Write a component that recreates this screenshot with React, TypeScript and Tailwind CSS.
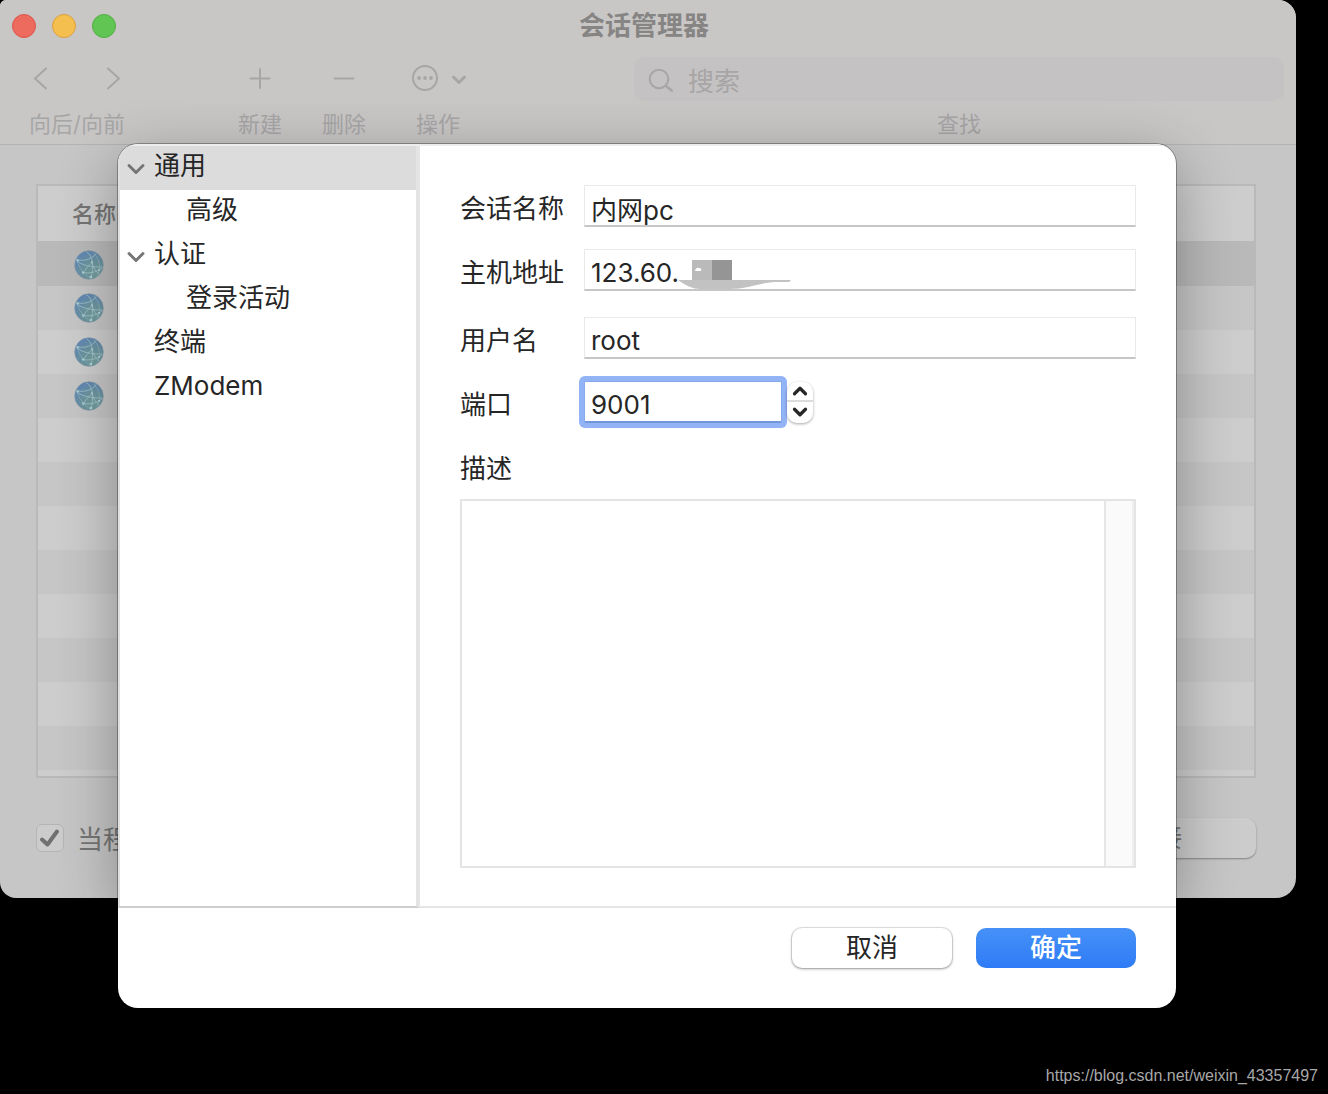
import React from "react";
import { ChevronDown, ChevronUp } from "lucide-react";

const rows = Array.from({ length: 12 }, (_, i) => ({
  icon: i < 4,
  tone: i === 0 ? "bg-[#b9b9b9]" : i % 2 === 1 ? "bg-[#c6c6c6]" : "bg-[#cdcdcd]",
}));

const tree = [
  { label: "通用", open: true, child: false, selected: true },
  { label: "高级", open: false, child: true, selected: false },
  { label: "认证", open: true, child: false, selected: false },
  { label: "登录活动", open: false, child: true, selected: false },
  { label: "终端", open: false, child: false, selected: false },
  { label: "ZModem", open: false, child: false, selected: false },
];

function Globe() {
  return (
    <svg viewBox="0 0 30 30" className="block size-[30px]" aria-hidden="true">
      <defs>
        <radialGradient id="globe" cx="0.65" cy="0.75" r="0.75">
          <stop offset="0" stopColor="#739c9b" />
          <stop offset="0.5" stopColor="#6c959f" />
          <stop offset="1" stopColor="#6288b4" />
        </radialGradient>
      </defs>
      <circle cx="15" cy="15" r="14.3" fill="url(#globe)" stroke="#8399a8" strokeWidth="0.6" />
      <g fill="none" stroke="#a3c5cc" strokeWidth="0.8" strokeLinecap="round">
        <path d="M2 9C8 12 17 10 22 4" />
        <path d="M2 10C8 16 17 17 28 17" />
        <path d="M13 2C19 6 20 16 17 28" />
        <path d="M20 3C25 9 28 17 23 26" strokeOpacity="0.6" />
        <path d="M18 13C14 15 11 20 9 24" />
        <path d="M18 13C19 17 22 22 25 24" />
        <path d="M8 22C13 24 22 23 28 18" />
        <path d="M3 11C5 17 9 23 16 28" strokeOpacity="0.6" />
      </g>
      <g fill="#b0d4d4">
        <circle cx="18" cy="12" r="0.9" />
        <circle cx="9" cy="22.500" r="1" />
        <circle cx="17" cy="27" r="1.300" />
        <circle cx="25" cy="20" r="1.100" />
        <circle cx="4" cy="10.500" r="1" />
      </g>
    </svg>
  );
}

function Tool({ label, className, children }: { label: string; className: string; children: React.ReactNode }) {
  return (
    <button type="button" className={className}>
      <span className="flex h-11 items-center justify-center">{children}</span>
      <span className="mt-[9px] block text-center text-[22px] leading-7 whitespace-nowrap">{label}</span>
    </button>
  );
}

function Toolbar() {
  return (
    <header className="h-[145px] rounded-tl-md rounded-tr-[18px] border-b border-[#b5b4b3] bg-[#c9c7c6]">
      <div className="relative flex h-[52px] items-center justify-center pr-2">
        <div className="absolute inset-y-0 left-3 flex items-center gap-4">
          <button type="button" aria-label="关闭" className="size-6 rounded-full border border-[#de5347] bg-[#ed6a5e]" />
          <button type="button" aria-label="最小化" className="size-6 rounded-full border border-[#d9a03c] bg-[#f5bf4f]" />
          <button type="button" aria-label="缩放" className="size-6 rounded-full border border-[#4fae41] bg-[#61c554]" />
        </div>
        <h1 className="text-[26px] leading-8 font-bold text-[#868584]">会话管理器</h1>
      </div>
      <div className="flex items-start pt-[5px] pr-3 pl-[26px] text-[#a7a6a6]">
        <div className="w-[102px]">
          <div className="flex h-11 items-center justify-between px-0.5">
            <button type="button" aria-label="向后">
              <svg viewBox="0 0 26 26" className="size-[26px]" fill="none" stroke="currentColor" strokeWidth="2" strokeLinecap="round">
                <path d="M18 2.500L7 12.500l11 10" />
              </svg>
            </button>
            <button type="button" aria-label="向前">
              <svg viewBox="0 0 26 26" className="size-[26px]" fill="none" stroke="currentColor" strokeWidth="2" strokeLinecap="round">
                <path d="M8 2.500l11 10-11 10" />
              </svg>
            </button>
          </div>
          <div className="mt-[9px] text-center text-[22px] leading-7 whitespace-nowrap">向后/向前</div>
        </div>
        <Tool label="新建" className="ml-[110px] w-11">
          <svg viewBox="0 0 22 22" className="size-[22px]" stroke="currentColor" strokeWidth="2" strokeLinecap="round">
            <path d="M1.500 10.500h19M11 1v19" />
          </svg>
        </Tool>
        <Tool label="删除" className="ml-10 w-11">
          <svg viewBox="0 0 22 22" className="size-[22px]" stroke="currentColor" strokeWidth="2" strokeLinecap="round">
            <path d="M1.500 10.500h19" />
          </svg>
        </Tool>
        <Tool label="操作" className="ml-[43px] w-[58px]">
          <svg viewBox="0 0 58 28" className="h-7 w-[58px]" fill="none" stroke="currentColor" strokeWidth="2">
            <circle cx="16" cy="13" r="12" />
            <g fill="currentColor" stroke="none">
              <circle cx="10" cy="13" r="1.900" />
              <circle cx="16" cy="13" r="1.900" />
              <circle cx="22" cy="13" r="1.900" />
            </g>
            <path d="M44.500 12l5.500 5.500 5.500-5.500" strokeWidth="3" strokeLinecap="round" strokeLinejoin="round" />
          </svg>
        </Tool>
        <div className="ml-[167px] flex-1">
          <div className="flex h-11 items-center gap-3.5 rounded-[10px] bg-[#c4c2c2] pl-3.5">
            <svg viewBox="0 0 26 26" className="size-[26px] shrink-0" fill="none" stroke="currentColor" strokeWidth="2" strokeLinecap="round">
              <circle cx="11" cy="13" r="9.300" />
              <path d="M17.800 19.800l6 5" strokeWidth="2.500" />
            </svg>
            <input id="search" type="search" placeholder="搜索" className="h-9 w-full min-w-0 bg-transparent pt-1 text-[26px] outline-none placeholder:text-[#a7a5a5]" />
          </div>
          <label htmlFor="search" className="mt-[9px] block text-center text-[22px] leading-7">查找</label>
        </div>
      </div>
    </header>
  );
}

function SessionTable() {
  return (
    <div className="border-2 border-[#b9b9b9] bg-[#cdcdcd] pb-1.5">
      <table className="w-full border-collapse">
        <thead>
          <tr className="h-14 border-b-2 border-[#b9b9b9]">
            <th className="p-0 pl-[34px] text-left text-[22px] leading-7 font-medium text-[#757575]">名称</th>
          </tr>
        </thead>
        <tbody>
          {rows.map((row, i) => (
            <tr key={i} className={row.tone}>
              <td className="h-11 p-0 pl-9">{row.icon && <Globe />}</td>
            </tr>
          ))}
        </tbody>
      </table>
    </div>
  );
}

function Sidebar() {
  return (
    <nav className="w-[302px] shrink-0 border-r-4 border-b-2 border-l-2 border-r-[#e4e4e4] border-b-[#cecece] border-l-[#e0e0e0]">
      <ul>
        {tree.map((item) => (
          <li key={item.label} className={item.selected ? "bg-[#dcdcdc]" : ""}>
            <button type="button" className={item.child ? "flex h-11 w-full items-center pb-1 pl-[66px]" : "flex h-11 w-full items-center pb-1 pl-[5px]"}>
              {!item.child && (
                <span className="mt-1.5 mr-[7px] flex w-[22px] shrink-0 justify-center">
                  {item.open && <ChevronDown size={28} strokeWidth={2.5} className="-mx-1 shrink-0 text-[#757575]" />}
                </span>
              )}
              {item.label}
            </button>
          </li>
        ))}
      </ul>
    </nav>
  );
}

const field = "h-[42px] w-full border border-[#e9e9e9] border-b-2 border-b-[#c6c6c6] bg-white px-1.5 pt-1.5 outline-none";

function SessionForm() {
  return (
    <div className="flex flex-1 flex-col border-b-2 border-[#e5e5e5] pt-[39px] pr-10 pb-[38px] pl-10">
      <div className="grid grid-cols-[124px_1fr] items-center">
        <label htmlFor="name" className="pt-1.5">会话名称</label>
        <input id="name" className={field} defaultValue="内网pc" />
        <label htmlFor="host" className="mt-[22px] pt-1.5">主机地址</label>
        <div className="relative mt-[22px]">
          <input id="host" className={field} defaultValue="123.60." />
          <svg viewBox="0 0 116 32" className="absolute top-[9px] left-[94px] h-8 w-[116px]" aria-hidden="true">
            <path d="M0 22h112q2 1-2 2H96Q80 26 70 29Q62 31 52 31H22Q12 31 0 22z" fill="#c2c2c2" />
            <path d="M14 2h20v20H14z" fill="#bababa" />
            <path d="M34 2h20v20H34z" fill="#959595" />
            <path d="M17 13q1-4 4-3q3 0 2 3z" fill="#fff" />
          </svg>
        </div>
        <label htmlFor="user" className="mt-[26px] pt-1.5">用户名</label>
        <input id="user" className={field + " mt-[26px]"} defaultValue="root" />
        <label htmlFor="port" className="mt-[22px] pt-1.5">端口</label>
        <div className="mt-[22px] flex items-center gap-[5px]">
          <input id="port" className="h-[42px] w-[198px] rounded-xs border border-b-2 border-[#86a9ec] border-b-[#7096dc] bg-white px-1.5 pt-1.5 ring-5 ring-[#92b3f5] outline-none" defaultValue="9001" />
          <div className="grid h-[41px] w-[26px] grid-rows-[20px_1fr] rounded-[10px] shadow-[0_1px_3px_rgba(0,0,0,0.35)]">
            <button type="button" aria-label="增加" className="flex items-center justify-center border-b-2 border-[#dcdcdc]">
              <ChevronUp size={22} strokeWidth={3.5} className="-my-1" />
            </button>
            <button type="button" aria-label="减少" className="flex items-center justify-center">
              <ChevronDown size={22} strokeWidth={3.5} className="-my-1" />
            </button>
          </div>
        </div>
      </div>
      <label htmlFor="desc" className="mt-6.5 leading-10">描述</label>
      <div className="mt-2.5 flex h-[369px] border-2 border-[#e4e4e4]">
        <textarea id="desc" className="min-w-0 flex-1 resize-none p-1.5 outline-none" />
        <div className="w-[30px] border-r-2 border-l-2 border-r-[#efefef] border-l-[#e6e6e6] bg-[#fafafa]" />
      </div>
    </div>
  );
}

export default function App() {
  return (
    <div className="flex min-h-screen flex-col overflow-hidden bg-black font-[Inter,'Noto_Sans_CJK_SC',sans-serif] text-[#262626]">
      <div className="relative mr-8 rounded-tl-md rounded-tr-[18px] rounded-br-[20px] rounded-bl-[16px] bg-[#c6c6c6]">
        <Toolbar />
        <main className="px-9 pt-[39px] pb-10">
          <div className="mr-1">
            <SessionTable />
          </div>
          <div className="mt-10 mr-1 flex items-center justify-between text-[26px] leading-8 text-[#757575]">
            <label className="flex items-center gap-[13px]">
              <span className="relative flex size-7">
                <input type="checkbox" defaultChecked className="size-7 appearance-none rounded-md border border-[#b5b5b5] bg-[#cccccc]" />
                <svg viewBox="0 0 28 28" className="pointer-events-none absolute inset-0 size-7" fill="none" stroke="#707070" strokeWidth="4" strokeLinecap="round" strokeLinejoin="round">
                  <path d="M6 15.500l5.500 5L21 7.500" />
                </svg>
              </span>
              <span className="pt-1">当程</span>
            </label>
            <button type="button" className="h-10 w-[200px] rounded-[10px] bg-[#cccccc] shadow-[0_1px_2px_rgba(0,0,0,0.35)]">连接</button>
          </div>
        </main>
        <div className="pointer-events-none absolute inset-0 overflow-hidden rounded-[20px]">
          <div className="absolute top-36 right-[120px] bottom-0 left-[118px] rounded-t-[20px] shadow-[0_16px_60px_rgba(0,0,0,0.32)]" />
        </div>
        <section role="dialog" aria-label="会话" className="absolute top-36 right-[120px] left-[118px] overflow-hidden rounded-[20px] bg-white text-[26px] leading-8 shadow-[0_0_0_1px_rgba(0,0,0,0.3)]">
          <div className="flex border-t-2 border-[#ededed]">
            <Sidebar />
            <SessionForm />
          </div>
          <footer className="flex items-center justify-end gap-6 pt-5 pr-10 pb-10">
            <button type="button" className="h-10 w-40 rounded-[10px] bg-white shadow-[0_0_0_1px_rgba(0,0,0,0.1),0_1px_3px_rgba(0,0,0,0.35)]">取消</button>
            <button type="button" className="h-10 w-40 rounded-[10px] bg-linear-to-b from-[#4691f8] to-[#2e7bf6] font-medium text-white">确定</button>
          </footer>
        </section>
      </div>
      <p className="mt-auto pr-2.5 pb-1.5 text-right font-['Liberation_Sans',sans-serif] text-base text-[#a8a8a8]">https://blog.csdn.net/weixin_43357497</p>
    </div>
  );
}
